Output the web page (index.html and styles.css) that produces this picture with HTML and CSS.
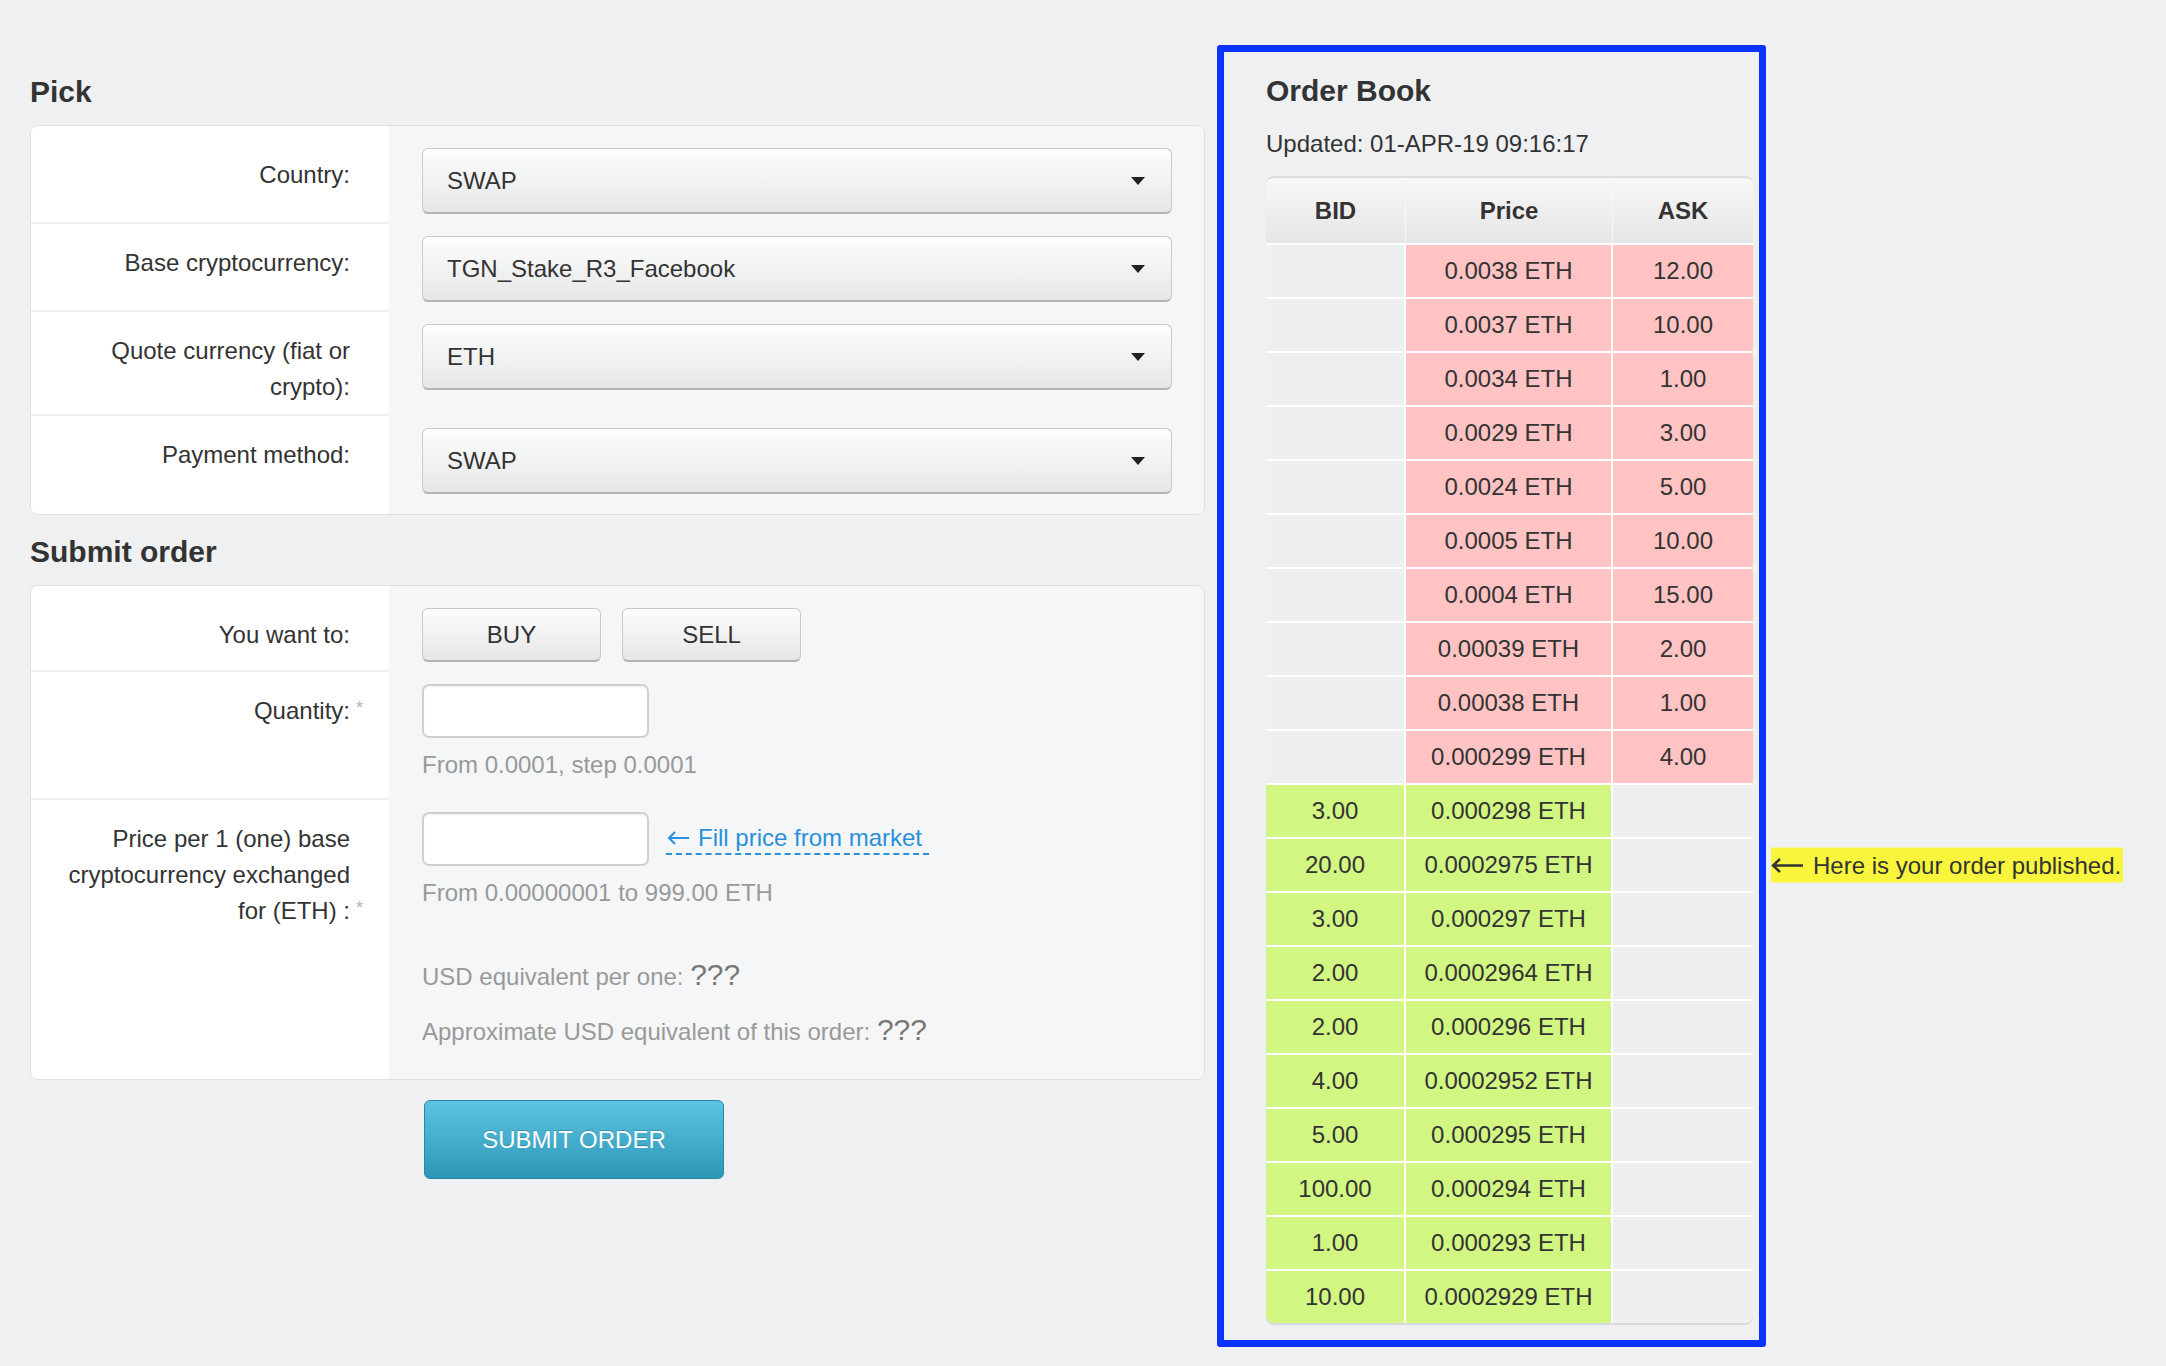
FILE: index.html
```html
<!DOCTYPE html>
<html lang="en">

<head>
    <meta charset="UTF-8">
    <meta name="viewport" content="width=device-width, initial-scale=1.0">
    <title>Order</title>
    <link rel="stylesheet" href="styles.css">
</head>

<body>
    <div class="page">
        <div class="main">
            <h2 class="title">Pick</h2>
            <div class="panel">
                <div class="label">Country:</div>
                <div class="field">
                    <div class="select"><span>SWAP</span><i class="caret"></i></div>
                </div>
                <div class="label">Base cryptocurrency:</div>
                <div class="field">
                    <div class="select"><span>TGN_Stake_R3_Facebook</span><i class="caret"></i></div>
                </div>
                <div class="label">Quote currency (fiat or crypto):</div>
                <div class="field">
                    <div class="select"><span>ETH</span><i class="caret"></i></div>
                </div>
                <div class="label last">Payment method:</div>
                <div class="field">
                    <div class="select"><span>SWAP</span><i class="caret"></i></div>
                </div>
            </div>

            <h2 class="title title-order">Submit order</h2>
            <div class="panel">
                <div class="label">You want to:</div>
                <div class="field">
                    <div class="btns">
                        <button class="btn">BUY</button>
                        <button class="btn">SELL</button>
                    </div>
                </div>
                <div class="label">Quantity:<span class="req">*</span></div>
                <div class="field">
                    <input type="text" class="input">
                    <p class="hint">From 0.0001, step 0.0001</p>
                </div>
                <div class="label last">Price per 1 (one) base cryptocurrency exchanged for (ETH) :<span class="req">*</span></div>
                <div class="field">
                    <div class="inline">
                        <input type="text" class="input">
                        <a href="#" class="fill">
                            <svg class="arrow" width="23" height="14" viewBox="0 0 23 14"><path d="M22 7H2M8 1L2 7l6 6" fill="none" stroke="currentColor" stroke-width="2"/></svg>Fill price from market
                        </a>
                    </div>
                    <p class="hint">From 0.00000001 to 999.00 ETH</p>
                    <p class="usd">USD equivalent per one: <span class="qqq">???</span></p>
                    <p class="usd usd-order">Approximate USD equivalent of this order: <span class="qqq">???</span></p>
                </div>
            </div>
            <button class="submit">SUBMIT ORDER</button>
        </div>

        <div class="book">
            <h2 class="title book-title">Order Book</h2>
            <div class="updated">Updated: 01-APR-19 09:16:17</div>
            <table class="ob">
                <colgroup>
                    <col class="c-side">
                    <col class="c-price">
                    <col class="c-side">
                </colgroup>
                <thead>
                    <tr>
                        <th>BID</th>
                        <th>Price</th>
                        <th>ASK</th>
                    </tr>
                </thead>
                <tbody>
                    <tr><td></td><td class="ask">0.0038 ETH</td><td class="ask">12.00</td></tr>
                    <tr><td></td><td class="ask">0.0037 ETH</td><td class="ask">10.00</td></tr>
                    <tr><td></td><td class="ask">0.0034 ETH</td><td class="ask">1.00</td></tr>
                    <tr><td></td><td class="ask">0.0029 ETH</td><td class="ask">3.00</td></tr>
                    <tr><td></td><td class="ask">0.0024 ETH</td><td class="ask">5.00</td></tr>
                    <tr><td></td><td class="ask">0.0005 ETH</td><td class="ask">10.00</td></tr>
                    <tr><td></td><td class="ask">0.0004 ETH</td><td class="ask">15.00</td></tr>
                    <tr><td></td><td class="ask">0.00039 ETH</td><td class="ask">2.00</td></tr>
                    <tr><td></td><td class="ask">0.00038 ETH</td><td class="ask">1.00</td></tr>
                    <tr><td></td><td class="ask">0.000299 ETH</td><td class="ask">4.00</td></tr>
                    <tr><td class="bid">3.00</td><td class="bid">0.000298 ETH</td><td></td></tr>
                    <tr>
                        <td class="bid">20.00</td><td class="bid">0.0002975 ETH</td>
                        <td class="mine">
                            <span class="note"><svg class="arrow" width="33" height="16" viewBox="0 0 33 16"><path d="M32 8H2M9 1.5L2 8l7 6.5" fill="none" stroke="currentColor" stroke-width="2.4"/></svg>Here is your order published.</span>
                        </td>
                    </tr>
                    <tr><td class="bid">3.00</td><td class="bid">0.000297 ETH</td><td></td></tr>
                    <tr><td class="bid">2.00</td><td class="bid">0.0002964 ETH</td><td></td></tr>
                    <tr><td class="bid">2.00</td><td class="bid">0.000296 ETH</td><td></td></tr>
                    <tr><td class="bid">4.00</td><td class="bid">0.0002952 ETH</td><td></td></tr>
                    <tr><td class="bid">5.00</td><td class="bid">0.000295 ETH</td><td></td></tr>
                    <tr><td class="bid">100.00</td><td class="bid">0.000294 ETH</td><td></td></tr>
                    <tr><td class="bid">1.00</td><td class="bid">0.000293 ETH</td><td></td></tr>
                    <tr><td class="bid">10.00</td><td class="bid">0.0002929 ETH</td><td></td></tr>
                </tbody>
            </table>
        </div>
    </div>
</body>

</html>
```

FILE: styles.css
```css
body {
    margin: 0;
    background-color: #eff0f2;
    font-family: "Liberation Sans", Arial, sans-serif;
    font-size: 24px;
    line-height: 36px;
    color: #333;
}

.page {
    display: flex;
    align-items: flex-start;
    padding: 45px 0 0 30px;
}

.main {
    width: 1175px;
    padding-top: 29px;
}

.title {
    margin: 0 0 15px;
    font-size: 30px;
    line-height: 36px;
    font-weight: bold;
    color: #333;
}

.title-order {
    margin-top: 19px;
}

/* two column form box: white labels, grey fields */
.panel {
    display: grid;
    grid-template-columns: 358px 1fr;
    padding: 10px 0;
    border: 1px solid #dfe0e3;
    border-radius: 8px;
    background: linear-gradient(to right, #fff 358px, #f5f6f8 358px);
}

.label {
    padding: 21px 39px 9px 20px;
    text-align: right;
    border-bottom: 2px solid #eeeff1;
}

.label.last {
    border-bottom: 0;
}

.req {
    display: inline-block;
    width: 14px;
    margin-left: 6px;
    margin-right: -20px;
    font-size: 18px;
    color: #b5b5b5;
    vertical-align: top;
    line-height: 30px;
    text-align: left;
}

.field {
    padding: 12px 32px 10px 33px;
}

.select {
    display: flex;
    align-items: center;
    height: 66px;
    box-sizing: border-box;
    padding: 0 26px 0 24px;
    border: 1px solid #c9cacd;
    border-bottom: 2px solid #b4b5b8;
    border-radius: 6px;
    background: linear-gradient(#fdfdfd, #e6e7e8);
    color: #333;
}

.caret {
    margin-left: auto;
    border-left: 7px solid transparent;
    border-right: 7px solid transparent;
    border-top: 8px solid #222;
}

.btns {
    display: flex;
    gap: 21px;
}

.btn {
    width: 179px;
    height: 54px;
    font: inherit;
    color: #333;
    background: linear-gradient(#fdfdfd, #e6e6e6);
    border: 1px solid #c8c9cb;
    border-bottom: 2px solid #b2b3b5;
    border-radius: 6px;
}

.input {
    display: block;
    width: 227px;
    height: 54px;
    box-sizing: border-box;
    border: 2px solid #cfd0d2;
    border-radius: 7px;
    background: #fff;
    box-shadow: inset 0 1px 2px rgba(0, 0, 0, 0.06);
}

.inline {
    display: flex;
    align-items: center;
    gap: 17px;
}

.fill {
    display: flex;
    align-items: center;
    color: #2b90d9;
    text-decoration: none;
    line-height: 28px;
    padding: 0 7px 1px 1px;
    border-bottom: 2px dashed #2b90d9;
}

.arrow {
    flex: none;
    margin-right: 8px;
}

.hint {
    margin: 9px 0 7px;
    color: #999;
}

.usd {
    margin: 48px 0 0;
    color: #999;
}

.usd-order {
    margin: 19px 0 9px;
}

.qqq {
    font-size: 30px;
    line-height: 20px;
    color: #777;
}

.submit {
    display: block;
    width: 300px;
    height: 79px;
    margin: 20px 0 0 394px;
    font: inherit;
    color: #fff;
    background: linear-gradient(#5cc4e1, #2e97b7);
    border: 1px solid #2b87a5;
    border-radius: 6px;
    text-shadow: 0 -1px 0 rgba(0, 0, 0, 0.2);
}

/* order book, with the blue marker frame round it */
.book {
    width: 549px;
    box-sizing: border-box;
    margin-left: 12px;
    padding: 21px 6px 17px 42px;
    border: 7px solid #0a33ff;
    border-radius: 3px;
}

.book-title {
    margin-bottom: 17px;
}

.updated {
    margin-bottom: 14px;
}

.ob {
    width: 487px;
    table-layout: fixed;
    border-collapse: separate;
    border-spacing: 0;
    text-align: center;
    border-radius: 8px;
    box-shadow: 0 2px 0 #d8d9dc;
}

.c-side {
    width: 140px;
}

.c-price {
    width: 207px;
}

.ob th {
    padding: 0;
    line-height: 65px;
    font-weight: bold;
    background: linear-gradient(#f8f8f8, #e5e5e6);
    border-top: 2px solid #dcdddf;
    border-bottom: 2px solid #fff;
    border-right: 1px solid #f7f7f7;
}

.ob th:first-child {
    border-top-left-radius: 8px;
}

.ob th:last-child {
    border-top-right-radius: 8px;
    border-right: 0;
}

.ob td {
    padding: 0;
    line-height: 52px;
    background-color: #eeeff1;
    border-bottom: 2px solid #fff;
    border-right: 2px solid #fff;
}

.ob td:last-child {
    border-right: 0;
}

.ob tr:last-child td {
    border-bottom: 0;
}

.ob tr:last-child td:first-child {
    border-bottom-left-radius: 8px;
}

.ob tr:last-child td:last-child {
    border-bottom-right-radius: 8px;
}

.ob td.ask {
    background-color: #ffc3c3;
}

.ob td.bid {
    background-color: #d1f682;
}

.mine {
    position: relative;
}

.note {
    position: absolute;
    left: calc(100% + 18px);
    top: 50%;
    transform: translateY(-50%);
    display: flex;
    align-items: center;
    padding: 0 2px 0 0;
    white-space: nowrap;
    line-height: 35px;
    background-color: #f8f53c;
    color: #333;
}

.note .arrow {
    margin-right: 9px;
}
```
